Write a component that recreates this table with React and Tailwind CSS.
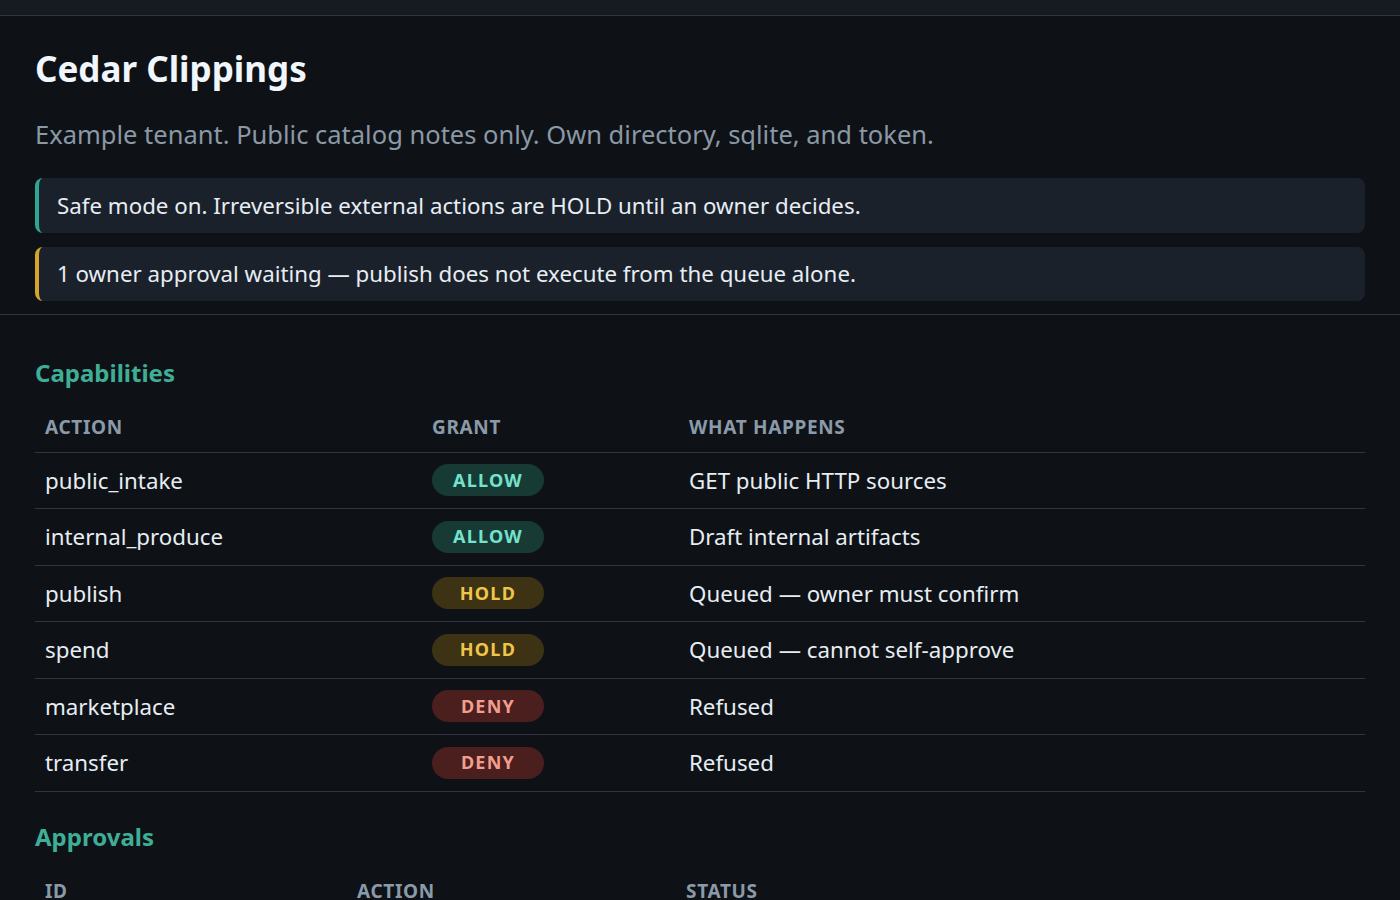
import React from "react";

const caps = [
  { action: "public_intake", grant: "ALLOW", what: "GET public HTTP sources" },
  { action: "internal_produce", grant: "ALLOW", what: "Draft internal artifacts" },
  { action: "publish", grant: "HOLD", what: "Queued — owner must confirm" },
  { action: "spend", grant: "HOLD", what: "Queued — cannot self-approve" },
  { action: "marketplace", grant: "DENY", what: "Refused" },
  { action: "transfer", grant: "DENY", what: "Refused" },
];

function Badge({ grant }) {
  const cls =
    grant === "ALLOW"
      ? "bg-[#173a35] text-[#74e2cc]"
      : grant === "HOLD"
      ? "bg-[#3d3214] text-[#f0c648]"
      : "bg-[#4a1f1e] text-[#f29d8f]";
  return (
    <span
      className={`inline-flex items-center justify-center w-[112px] h-[32px] rounded-full text-[18px] font-bold tracking-[0.07em] ${cls}`}
    >
      {grant}
    </span>
  );
}

const th = "text-left px-[10px] pb-[10px] text-[19px] font-bold tracking-[0.035em] text-[#8b9aa8]";

export default function App() {
  return (
    <div
      className="min-h-[900px] bg-[#0e1217] text-[#e6edf3]"
      style={{ fontFamily: '"Noto Sans", "DejaVu Sans", sans-serif' }}
    >
      <div className="h-[16px] bg-[#161b22] border-b border-[#30363d]" />
      <header className="px-[35px] pt-[29px] pb-[13px] border-b border-[#30363d]">
        <h1 className="text-[35px] font-bold leading-[48px] text-[#f0f6fc]">Cedar Clippings</h1>
        <p className="mt-[23px] text-[25.5px] leading-[36px] text-[#8b98a5]">
          Example tenant. Public catalog notes only. Own directory, sqlite, and token.
        </p>
        <div className="mt-[26px] flex flex-col gap-[14px]">
          <div className="h-[55px] flex items-center rounded-lg border-l-4 border-[#2fa593] bg-[#1b212b] pl-[18px] text-[22.3px]">
            Safe mode on. Irreversible external actions are HOLD until an owner decides.
          </div>
          <div className="h-[54px] flex items-center rounded-lg border-l-4 border-[#d4a52b] bg-[#1b212b] pl-[18px] text-[22.3px]">
            1 owner approval waiting — publish does not execute from the queue alone.
          </div>
        </div>
      </header>
      <main className="px-[35px] pt-[40px]">
        <h2 className="text-[24px] font-bold leading-[36px] text-[#3fae96]">Capabilities</h2>
        <table className="mt-[22px] w-full border-collapse">
          <thead>
            <tr className="border-b border-[#30363d]">
              <th className={`w-[387px] ${th}`}>ACTION</th>
              <th className={`w-[257px] ${th}`}>GRANT</th>
              <th className={th}>WHAT HAPPENS</th>
            </tr>
          </thead>
          <tbody>
            {caps.map((c) => (
              <tr key={c.action} className="border-b border-[#30363d] h-[56.5px]">
                <td className="px-[10px] text-[22.3px]">{c.action}</td>
                <td className="px-[10px]">
                  <Badge grant={c.grant} />
                </td>
                <td className="px-[10px] text-[22.3px]">{c.what}</td>
              </tr>
            ))}
          </tbody>
        </table>
        <h2 className="mt-[27px] text-[24px] font-bold leading-[36px] text-[#3fae96]">Approvals</h2>
        <table className="mt-[22px] w-full border-collapse">
          <thead>
            <tr className="border-b border-[#30363d]">
              <th className={`w-[312px] ${th}`}>ID</th>
              <th className={`w-[329px] ${th}`}>ACTION</th>
              <th className={th}>STATUS</th>
            </tr>
          </thead>
        </table>
      </main>
    </div>
  );
}
